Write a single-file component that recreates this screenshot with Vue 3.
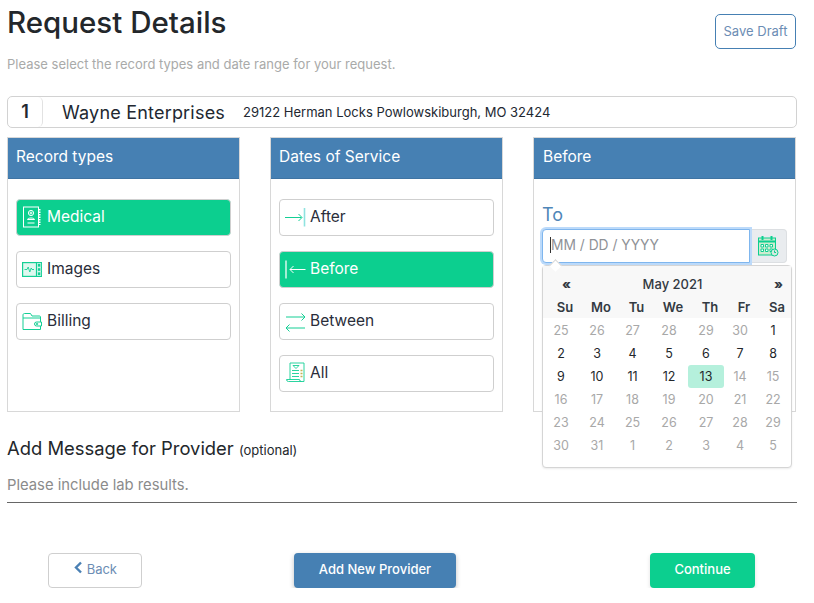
<template>
  <div class="page">
    <div class="title-row">
      <div>
        <h1 class="title">Request Details</h1>
        <p class="subtitle">Please select the record types and date range for your request.</p>
      </div>
      <button class="draft-btn">Save Draft</button>
    </div>

    <div class="provider-row">
      <span class="provider-num">1</span>
      <span class="provider-name">Wayne Enterprises</span>
      <span class="provider-addr">29122 Herman Locks Powlowskiburgh, MO 32424</span>
    </div>

    <div class="columns">
      <section class="card">
        <h2 class="card-head">Record types</h2>
        <div class="card-body">
          <button v-for="item in recordTypes" :key="item.name" class="option" :class="{ active: item.active }">
            <svg v-if="item.name === 'Medical'" class="icon" viewBox="0 0 20 22" fill="none" stroke="currentColor" stroke-width="1">
              <rect x="1.500" y="1" width="15" height="20" />
              <path d="M17.500 3v16" stroke-width="2" stroke-dasharray="1.500 1" />
              <circle cx="9" cy="7" r="2.600" />
              <path d="M7.600 7h2.800M9 5.600v2.800M5.500 13.500c0-2 7-2 7 0zM5.500 17h7" />
            </svg>
            <svg v-else-if="item.name === 'Images'" class="icon" viewBox="0 0 20 22" fill="none" stroke="currentColor" stroke-width="1.200">
              <rect x="0.600" y="4.600" width="18.800" height="13.800" fill="#dff8ef" />
              <path d="M14.500 4.600v13.800" />
              <path d="M2.500 11.500h2.500l1.200-2.500 1.600 5 1.400-4 .8 1.500h2" stroke-width=".9" />
              <path d="M15.500 5.500h3.200v3.400h-3.200zM15.500 9.800h3.200v3.400h-3.200zM15.500 14.100h3.200v3.400h-3.200z" fill="currentColor" stroke="#fff" stroke-width=".5" />
            </svg>
            <svg v-else class="icon" viewBox="0 0 20 22" fill="none" stroke="currentColor" stroke-width="1">
              <path d="M1 19.500V5c0-.8.500-1.500 1.500-1.500h6L10 6h7.500c.6 0 1 .4 1 1v12.500z" />
              <path d="M1 8h17.500" />
              <path d="M19.500 12h-5a1.800 1.800 0 0 0 0 4h5z" fill="#fff" />
              <circle cx="15" cy="14" r=".8" />
            </svg>
            <span>{{ item.name }}</span>
          </button>
        </div>
      </section>

      <section class="card">
        <h2 class="card-head">Dates of Service</h2>
        <div class="card-body">
          <button v-for="item in dateModes" :key="item.name" class="option" :class="{ active: item.active }">
            <svg v-if="item.name === 'After'" class="icon" viewBox="0 0 20 22" fill="none" stroke="currentColor" stroke-width="1">
              <path d="M0 11.500h16.500M13.500 8l3.500 3.500-3.500 3.500" />
              <path d="M19.500 2v18.500" stroke="#8fe3e0" stroke-width="1.600" />
            </svg>
            <svg v-else-if="item.name === 'Before'" class="icon" viewBox="0 0 20 22" fill="none" stroke="currentColor" stroke-width="1">
              <path d="M20.500 11.500H5M8.500 8 5 11.500 8.500 15" />
              <path d="M1 2.500v18" stroke="#c9f5e6" stroke-width="1.600" />
            </svg>
            <svg v-else-if="item.name === 'Between'" class="icon" viewBox="0 0 20 22" fill="none" stroke="currentColor" stroke-width="1">
              <path d="M1 7h19M16.500 3.500 20 7l-3.500 3.500M20 18H1M4.500 14.500 1 18l3.500 3.500" />
            </svg>
            <svg v-else class="icon" viewBox="0 0 20 22" fill="none" stroke="currentColor" stroke-width=".9">
              <path d="M5 18V1h14v18.500H3.500a2 2 0 0 1-2-2h13a2 2 0 0 0 2 2" />
              <path d="M8 3.500h6l-3 3zM7 8.500h7M7 11.500h7M7 14.500h7" />
              <path d="M15.500 8.500h2M15.500 11.500h2M15.500 14.500h2" stroke="#c4b454" stroke-width="1.400" />
            </svg>
            <span>{{ item.name }}</span>
          </button>
        </div>
      </section>

      <section class="card card-wide">
        <h2 class="card-head">Before</h2>
        <div class="to-body">
          <label class="to-label">To</label>
          <div class="date-field">
            <div class="date-input"><i class="caret"></i>MM / DD / YYYY</div>
            <div class="cal-btn">
              <svg width="22" height="22" viewBox="0 0 22 22" fill="none" stroke="#0ccf8f" stroke-width="1">
                <rect x="1.500" y="3" width="17" height="17" fill="#cdebd0" />
                <path d="M1.500 6.500h17" stroke-width="2" />
                <path d="M5.500 1v4M14.500 1v4" stroke-width="2" />
                <path d="M4 9.500h2.500v2.500H4zM8.500 9.500H11v2.500H8.500zM13 9.500h2.500v2.500H13zM4 14h2.500v2.500H4zM8.500 14H11v2.500H8.500zM13 14h2.500v2.500H13z" fill="#fff" />
                <circle cx="17.500" cy="17.500" r="3.500" fill="#d7e9e0" />
                <path d="M17.500 15.500v2h1.500" />
              </svg>
            </div>
          </div>
        </div>

        <div class="picker">
          <i class="picker-tip"></i>
          <div class="picker-head">
            <div class="picker-nav">
              <span class="nav-arrow">«</span>
              <span>May 2021</span>
              <span class="nav-arrow">»</span>
            </div>
            <div class="week">
              <span v-for="d in weekDays" :key="d">{{ d }}</span>
            </div>
          </div>
          <div class="days">
            <span
              v-for="(day, i) in days"
              :key="i"
              class="day"
              :class="{ muted: day.muted, today: day.today }"
            >{{ day.label }}</span>
          </div>
        </div>
      </section>
    </div>

    <h3 class="msg-title">Add Message for Provider <small>(optional)</small></h3>
    <div class="msg-input">Please include lab results.</div>

    <div class="footer">
      <button class="back-btn">
        <svg width="10" height="13" viewBox="0 0 10 13" fill="none" stroke="#4a80b4" stroke-width="2.400">
          <path d="M8 1.500 3 6.500l5 5" />
        </svg>
        Back
      </button>
      <button class="add-btn">Add New Provider</button>
      <button class="continue-btn">Continue</button>
    </div>
  </div>
</template>

<script setup>
const recordTypes = [
  { name: 'Medical', active: true },
  { name: 'Images', active: false },
  { name: 'Billing', active: false },
]

const dateModes = [
  { name: 'After', active: false },
  { name: 'Before', active: true },
  { name: 'Between', active: false },
  { name: 'All', active: false },
]

const weekDays = ['Su', 'Mo', 'Tu', 'We', 'Th', 'Fr', 'Sa']

// April tail, May, then June head; only 1-13 May are selectable
const days = []
for (const n of [25, 26, 27, 28, 29, 30]) days.push({ label: n, muted: true })
for (let n = 1; n <= 31; n++) days.push({ label: n, muted: n > 13, today: n === 13 })
for (let n = 1; n <= 5; n++) days.push({ label: n, muted: true })
</script>

<style>
body {
  background: #fff;
}
</style>

<style scoped>
.page {
  width: 790px;
  margin-left: 7px;
  font-family: Inter, "Liberation Sans", sans-serif;
  color: #222831;
}

button {
  font-family: inherit;
  cursor: pointer;
}

.title-row {
  display: flex;
  justify-content: space-between;
  align-items: flex-start;
  height: 96px;
}

.title {
  margin: 0;
  padding-top: 3px;
  font-size: 29.500px;
  line-height: 38px;
  font-weight: 500;
  color: #23272b;
}

.subtitle {
  margin: 13px 0 0;
  font-size: 13px;
  line-height: 20px;
  color: #a9aaa9;
}

.draft-btn {
  width: 81px;
  height: 35px;
  margin: 14px 1px 0 0;
  padding: 0 0 2px;
  background: #fff;
  border: 1px solid #4680b3;
  border-radius: 5px;
  font-size: 13px;
  color: #6c8db4;
}

.provider-row {
  display: flex;
  align-items: center;
  height: 32px;
  box-sizing: border-box;
  border: 1px solid #d2d2d2;
  border-radius: 5px;
}

.provider-num {
  width: 35px;
  height: 30px;
  line-height: 30px;
  text-align: center;
  border-right: 1px solid #e2e2e2;
  border-radius: 5px;
  font-size: 18px;
  font-weight: 600;
  box-sizing: border-box;
}

.provider-name {
  margin-left: 19px;
  font-size: 18px;
  letter-spacing: 0.2px;
}

.provider-addr {
  margin-left: 18px;
  font-size: 13px;
}

.columns {
  display: grid;
  grid-template-columns: 233px 233px 263px;
  column-gap: 30px;
  margin-top: 9px;
}

.card {
  position: relative;
  height: 275px;
  box-sizing: border-box;
  border: 1px solid #d8d8d8;
}

.card-head {
  margin: 0;
  height: 41px;
  padding-left: 8px;
  background: #4680b3;
  border-bottom: 1px solid #3f74a3;
  box-sizing: border-box;
  font-size: 15.500px;
  line-height: 38px;
  font-weight: 400;
  color: #fff;
}

.card-wide .card-head {
  padding-left: 9px;
}

.card-body {
  display: flex;
  flex-direction: column;
  gap: 15px;
  padding: 20px 8px 0;
}

.option {
  display: flex;
  align-items: center;
  gap: 5px;
  height: 37px;
  padding: 0 5px 2px;
  background: #fff;
  border: 1px solid #cfcfcf;
  border-radius: 4px;
  font-size: 15.500px;
  color: #2a2d3a;
  text-align: left;
}

.option.active {
  background: #0ccf8f;
  color: #fff;
}

.icon {
  flex: none;
  width: 20px;
  height: 22px;
  color: #14cf95;
  overflow: visible;
}

.option.active .icon {
  color: #fff;
}

.to-body {
  padding: 24px 8px 0;
}

.to-label {
  display: block;
  font-size: 18px;
  line-height: 24px;
  color: #4f86b8;
}

.date-field {
  display: flex;
  margin-top: 2px;
  height: 34px;
}

.date-input {
  width: 209px;
  box-sizing: border-box;
  padding-left: 7px;
  background: #fff;
  border: 1px solid #7fb6ee;
  border-radius: 4px 0 0 4px;
  box-shadow: 0 0 0 2px #bcdafa;
  font-size: 13.800px;
  line-height: 31px;
  color: #8f9297;
  position: relative;
  z-index: 1;
}

.caret {
  display: inline-block;
  width: 1px;
  height: 16px;
  background: #333;
  vertical-align: -3px;
}

.cal-btn {
  display: flex;
  align-items: center;
  justify-content: center;
  width: 36px;
  background: #e9ecef;
  border: 1px solid #dcdfe2;
  border-left: none;
  border-radius: 0 4px 4px 0;
}

.picker {
  position: absolute;
  top: 127px;
  left: 8px;
  z-index: 2;
  width: 250px;
  height: 203px;
  box-sizing: border-box;
  background: #fff;
  border: 1px solid #d5d5d5;
  border-radius: 4px;
  box-shadow: 0 1px 2px rgba(0, 0, 0, 0.08);
}

.picker-tip {
  position: absolute;
  top: -5px;
  left: 8px;
  width: 8px;
  height: 8px;
  background: #fff;
  border-left: 1px solid #d5d5d5;
  border-top: 1px solid #d5d5d5;
  transform: rotate(45deg);
}

.picker-head {
  background: #f8f8f8;
  padding: 8px 0 0;
  height: 44px;
  font-size: 13px;
  font-weight: 600;
}

.picker-nav {
  display: flex;
  justify-content: space-between;
  padding: 0 8px 0 19px;
  line-height: 20px;
  color: #333a42;
  font-weight: 500;
}

.nav-arrow {
  font-weight: 800;
}

.week,
.days {
  display: grid;
  grid-template-columns: 36px 36px 35px 38px 36px 32px 34px;
  text-align: center;
}

.week {
  padding-left: 4px;
  margin-top: 3px;
  line-height: 20px;
  color: #333a42;
}

.days {
  margin-top: 1px;
}

.day {
  height: 23px;
  line-height: 23px;
  font-size: 12.500px;
  color: #23272b;
}

.day.muted {
  color: #a8a8a8;
}

.day.today {
  background: #b5f0dc;
  border-radius: 3px;
}

.msg-title {
  margin: 24px 0 0;
  font-size: 18.400px;
  line-height: 24px;
  font-weight: 400;
  color: #23272b;
}

.msg-title small {
  font-size: 13px;
}

.msg-input {
  height: 29px;
  margin-top: 11px;
  border-bottom: 1px solid #666;
  font-size: 14.800px;
  line-height: 24px;
  color: #8b8b8b;
}

.footer {
  display: flex;
  align-items: center;
  padding-left: 41px;
  margin-top: 50px;
}

.back-btn {
  width: 94px;
  height: 35px;
  padding-bottom: 4px;
  background: #fff;
  border: 1px solid #cfcfcf;
  border-radius: 4px;
  font-size: 13px;
  color: #6c8db4;
}

.add-btn {
  width: 162px;
  height: 35px;
  margin-left: 152px;
  padding-bottom: 4px;
  background: #4680b3;
  border: none;
  border-radius: 4px;
  box-shadow: 0 2px 5px rgba(0, 0, 0, 0.25);
  font-size: 13px;
  font-weight: 500;
  color: #fff;
}

.continue-btn {
  width: 105px;
  height: 35px;
  margin-left: 194px;
  padding-bottom: 4px;
  background: #0ccf8f;
  border: none;
  border-radius: 4px;
  box-shadow: 0 2px 4px rgba(0, 0, 0, 0.12);
  font-size: 13px;
  font-weight: 500;
  color: #fff;
}
</style>
